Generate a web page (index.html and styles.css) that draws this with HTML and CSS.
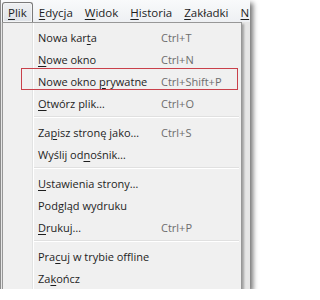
FILE: index.html
```html
<!DOCTYPE html>
<html lang="pl">
<head>
<meta charset="utf-8">
<title>Plik</title>
<link rel="stylesheet" href="styles.css">
</head>
<body>
<div class="frame">
  <div class="menubar">
    <span class="mb-item active"><u>P</u>lik</span>
    <span class="mb-item"><u>E</u>dycja</span>
    <span class="mb-item"><u>W</u>idok</span>
    <span class="mb-item"><u>H</u>istoria</span>
    <span class="mb-item"><u>Z</u>akładki</span>
    <span class="mb-item"><u>N</u></span>
  </div>
  <div class="menu">
    <div class="item"><span>Nowa kar<u>t</u>a</span><span class="key">Ctrl+T</span></div>
    <div class="item"><span><u>N</u>owe okno</span><span class="key">Ctrl+N</span></div>
    <div class="item marked"><span>Nowe okno <u>p</u>rywatne</span><span class="key">Ctrl+Shift+P</span></div>
    <div class="item"><span><u>O</u>twórz plik…</span><span class="key">Ctrl+O</span></div>
    <div class="sep"></div>
    <div class="item"><span>Za<u>p</u>isz stronę jako…</span><span class="key">Ctrl+S</span></div>
    <div class="item"><span>Wyślij od<u>n</u>ośnik…</span><span class="key"></span></div>
    <div class="sep"></div>
    <div class="item"><span><u>U</u>stawienia strony…</span><span class="key"></span></div>
    <div class="item"><span>Pod<u>g</u>ląd wydruku</span><span class="key"></span></div>
    <div class="item"><span><u>D</u>rukuj…</span><span class="key">Ctrl+P</span></div>
    <div class="sep"></div>
    <div class="item"><span>Pra<u>c</u>uj w trybie offline</span><span class="key"></span></div>
    <div class="item"><span>Za<u>k</u>ończ</span><span class="key"></span></div>
  </div>
</div>
</body>
</html>
```

FILE: styles.css
```css
html, body {
  margin: 0;
  padding: 0;
  background: #ffffff;
}

body {
  font-family: "Open Sans", "Noto Sans", "Liberation Sans", sans-serif;
  font-size: 11px;
  color: #1e1e1e;
}

.frame {
  width: 249px;
  height: 289px;
  border-left: 1px solid #8c8c8c;
  background: #e6e6e6;
  box-shadow: 3px 3px 5px rgba(0, 0, 0, 0.55);
  overflow: hidden;
}

.menubar {
  height: 22px;
  display: flex;
  align-items: stretch;
  padding-left: 1px;
  padding-top: 2px;
  box-sizing: border-box;
  background: linear-gradient(#f9fafb, #eef0f3);
  white-space: nowrap;
}

.mb-item {
  display: flex;
  align-items: center;
  padding: 0 5px;
  border: 1px solid transparent;
  border-bottom: 0;
  border-radius: 3px 3px 0 0;
  line-height: 1;
  font-size: 11.5px;
}

.mb-item.active {
  border-color: #7a7a7a;
  background: linear-gradient(#eef0f2, #dfe3e8);
  box-shadow: inset 0 0 0 1px #f4f5f6;
}

u {
  text-decoration: underline;
  text-underline-offset: 2px;
}

.menu {
  margin-left: 1px;
  width: 238px;
  border: 1px solid #979797;
  padding: 3px 0 1px;
  background:
    linear-gradient(to right, transparent 29px, #e2e3e3 29px, #e2e3e3 30px, #ffffff 30px, #ffffff 31px, transparent 31px),
    #f0f0f0;
  box-shadow: 2px 2px 2px rgba(0, 0, 0, 0.3);
}

.item {
  position: relative;
  height: 22px;
  display: grid;
  grid-template-columns: 123px auto;
  align-items: center;
  padding-left: 35px;
  white-space: nowrap;
}

.key {
  color: #6d6d6d;
}

.marked::after {
  content: "";
  position: absolute;
  left: 18px;
  right: 3px;
  top: -2px;
  bottom: 2px;
  border: 1px solid #c9404a;
}

.sep {
  height: 1px;
  margin: 2px 2px 3px 31px;
  border-bottom: 1px solid #ffffff;
  background: #e0e0e0;
}
```
